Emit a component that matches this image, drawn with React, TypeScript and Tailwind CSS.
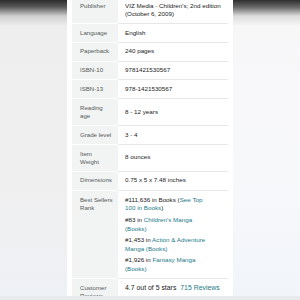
import React from 'react';

type Part = { text: string; link?: boolean };

interface Row {
  label: string[];
  value?: string[];
  groups?: Part[][][];
  first?: boolean;
}

const rows: Row[] = [
  { label: ['Publisher'], value: ["VIZ Media - Children's; 2nd edition", '(October 6, 2009)'], first: true },
  { label: ['Language'], value: ['English'] },
  { label: ['Paperback'], value: ['240 pages'] },
  { label: ['ISBN-10'], value: ['9781421530567'] },
  { label: ['ISBN-13'], value: ['978-1421530567'] },
  { label: ['Reading', 'age'], value: ['8 - 12 years'] },
  { label: ['Grade level'], value: ['3 - 4'] },
  { label: ['Item', 'Weight'], value: ['8 ounces'] },
  { label: ['Dimensions'], value: ['0.75 x 5 x 7.48 inches'] },
  {
    label: ['Best Sellers', 'Rank'],
    groups: [
      [
        [{ text: '#111,636 in Books (' }, { text: 'See Top', link: true }],
        [{ text: '100 in Books', link: true }, { text: ')' }],
      ],
      [[{ text: '#83 in ' }, { text: "Children's Manga", link: true }], [{ text: '(Books)', link: true }]],
      [[{ text: '#1,453 in ' }, { text: 'Action & Adventure', link: true }], [{ text: 'Manga (Books)', link: true }]],
      [[{ text: '#1,926 in ' }, { text: 'Fantasy Manga', link: true }], [{ text: '(Books)', link: true }]],
    ],
  },
];

function DetailRow({ row }: { row: Row }) {
  const twoLabel = row.label.length > 1;
  const labelPad = row.first ? 'pt-[2px]' : row.groups ? 'pt-[5.5px]' : twoLabel ? 'py-[5px]' : 'pt-[4.5px]';
  const valuePad = row.first ? 'pt-[1.5px] pb-[4px]' : row.groups ? 'pt-[5px] pb-[4px]' : 'py-[4.5px]';
  return (
    <div className="flex">
      <div className={`w-[46px] shrink-0 bg-[#f2f3f3] border-b border-white pl-[8px] text-[6.1px] leading-[8px] text-[#555a5a] ${labelPad}`}>
        {row.label.map((l) => (
          <div key={l} className="whitespace-nowrap">
            {l}
          </div>
        ))}
      </div>
      <div
        className={`w-[110px] shrink-0 border-b border-[#e6e7e7] pl-[7px] text-[#1a1a1a] flex flex-col ${
          row.groups || row.first ? 'justify-start' : 'justify-center'
        } ${valuePad}`}
      >
        {row.value &&
          row.value.map((v) => (
            <div key={v} className="whitespace-nowrap">
              {v}
            </div>
          ))}
        {row.groups && (
          <div className="flex flex-col gap-[2.75px]">
            {row.groups.map((g, i) => (
              <div key={i}>
                {g.map((line, k) => (
                  <div key={k} className="whitespace-nowrap">
                    {line.map((p, j) => (
                      <span key={j} className={p.link ? 'text-[#1b7a8a]' : ''}>
                        {p.text}
                      </span>
                    ))}
                  </div>
                ))}
              </div>
            ))}
          </div>
        )}
      </div>
    </div>
  );
}

export default function App() {
  return (
    <div className="relative w-[300px] h-[300px] overflow-hidden bg-[#e8ebee]">
      <div className="absolute inset-x-0 top-0 h-[296px] bg-[linear-gradient(to_bottom,#2b2b2b_0px,#5a5a5a_7px,#cfcfcf_16px,#eeeeee_26px,#efefef_60%,#eef1f5_100%)]" />
      <div className="absolute right-0 top-0 w-[70px] h-[296px] bg-[linear-gradient(to_bottom,#2e2e2e_0px,#666_7px,#dcdcdc_16px,#f7f7f8_26px,#f7f8fa_60%,#f1f5fa_100%)]" />
      <div
        className="relative ml-[67px] w-[166px] h-[296px] overflow-hidden bg-white px-[5px] text-[6.25px] leading-[8.75px]"
        style={{ fontFamily: '"Liberation Sans", Arial, sans-serif' }}
      >
        {rows.map((r) => (
          <DetailRow key={r.label.join(' ')} row={r} />
        ))}
        <div className="flex">
          <div className="w-[46px] shrink-0 bg-[#f2f3f3] pl-[8px] pt-[5.5px] text-[6.1px] leading-[8px] text-[#555a5a]">
            <div>Customer</div>
            <div>Reviews</div>
          </div>
          <div className="w-[110px] shrink-0 pl-[7px] pt-[5px] text-[6.9px] leading-[8.75px] text-[#1a1a1a] whitespace-nowrap">
            4.7 out of 5 stars <span className="ml-[2px] text-[#1b7a8a]">715 Reviews</span>
          </div>
        </div>
      </div>
    </div>
  );
}
